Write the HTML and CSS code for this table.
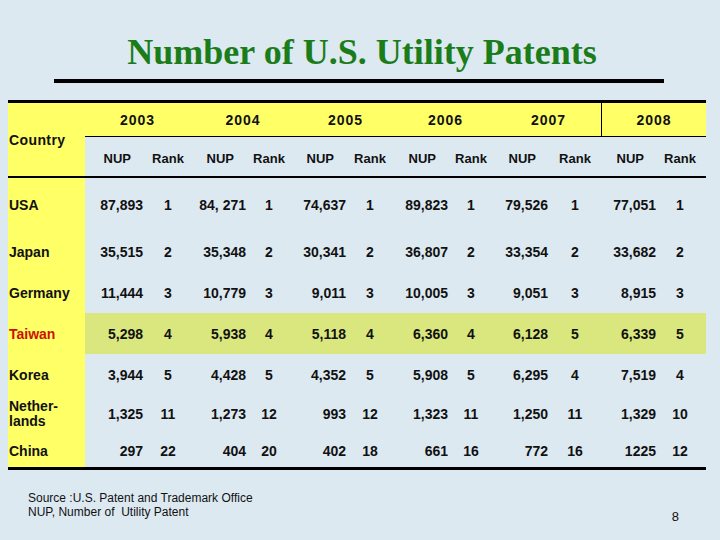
FILE: index.html
```html
<!DOCTYPE html>
<html>
<head>
<meta charset="utf-8">
<link rel="stylesheet" href="styles.css">
</head>
<body>
<div class="slide">
  <h1 class="title">Number of U.S. Utility Patents</h1>
  <div class="rule"></div>
  <div class="table">
    <div class="head">
      <div class="country-h">Country</div>
      <div class="years">
        <div class="year">2003</div>
        <div class="year">2004</div>
        <div class="year">2005</div>
        <div class="year">2006</div>
        <div class="year sep">2007</div>
        <div class="year">2008</div>
      </div>
      <div class="subs">
        <div class="nup-h">NUP</div><div class="rank-h">Rank</div>
        <div class="nup-h">NUP</div><div class="rank-h">Rank</div>
        <div class="nup-h">NUP</div><div class="rank-h">Rank</div>
        <div class="nup-h">NUP</div><div class="rank-h">Rank</div>
        <div class="nup-h">NUP</div><div class="rank-h">Rank</div>
        <div class="nup-h">NUP</div><div class="rank-h">Rank</div>
      </div>
    </div>
    <div class="row r-usa">
      <div class="cty">USA</div>
      <div class="nup">87,893</div><div class="rank">1</div>
      <div class="nup">84, 271</div><div class="rank">1</div>
      <div class="nup">74,637</div><div class="rank">1</div>
      <div class="nup">89,823</div><div class="rank">1</div>
      <div class="nup">79,526</div><div class="rank">1</div>
      <div class="nup">77,051</div><div class="rank">1</div>
    </div>
    <div class="row r-std">
      <div class="cty">Japan</div>
      <div class="nup">35,515</div><div class="rank">2</div>
      <div class="nup">35,348</div><div class="rank">2</div>
      <div class="nup">30,341</div><div class="rank">2</div>
      <div class="nup">36,807</div><div class="rank">2</div>
      <div class="nup">33,354</div><div class="rank">2</div>
      <div class="nup">33,682</div><div class="rank">2</div>
    </div>
    <div class="row r-std">
      <div class="cty">Germany</div>
      <div class="nup">11,444</div><div class="rank">3</div>
      <div class="nup">10,779</div><div class="rank">3</div>
      <div class="nup">9,011</div><div class="rank">3</div>
      <div class="nup">10,005</div><div class="rank">3</div>
      <div class="nup">9,051</div><div class="rank">3</div>
      <div class="nup">8,915</div><div class="rank">3</div>
    </div>
    <div class="row r-std hl">
      <div class="cty red">Taiwan</div>
      <div class="nup">5,298</div><div class="rank">4</div>
      <div class="nup">5,938</div><div class="rank">4</div>
      <div class="nup">5,118</div><div class="rank">4</div>
      <div class="nup">6,360</div><div class="rank">4</div>
      <div class="nup">6,128</div><div class="rank">5</div>
      <div class="nup">6,339</div><div class="rank">5</div>
    </div>
    <div class="row r-std">
      <div class="cty">Korea</div>
      <div class="nup">3,944</div><div class="rank">5</div>
      <div class="nup">4,428</div><div class="rank">5</div>
      <div class="nup">4,352</div><div class="rank">5</div>
      <div class="nup">5,908</div><div class="rank">5</div>
      <div class="nup">6,295</div><div class="rank">4</div>
      <div class="nup">7,519</div><div class="rank">4</div>
    </div>
    <div class="row r-nl">
      <div class="cty two">Nether-<br>lands</div>
      <div class="nup">1,325</div><div class="rank">11</div>
      <div class="nup">1,273</div><div class="rank">12</div>
      <div class="nup">993</div><div class="rank">12</div>
      <div class="nup">1,323</div><div class="rank">11</div>
      <div class="nup">1,250</div><div class="rank">11</div>
      <div class="nup">1,329</div><div class="rank">10</div>
    </div>
    <div class="row r-cn">
      <div class="cty">China</div>
      <div class="nup">297</div><div class="rank">22</div>
      <div class="nup">404</div><div class="rank">20</div>
      <div class="nup">402</div><div class="rank">18</div>
      <div class="nup">661</div><div class="rank">16</div>
      <div class="nup">772</div><div class="rank">16</div>
      <div class="nup">1225</div><div class="rank">12</div>
    </div>
  </div>
  <div class="footer">
    <div class="source">Source :U.S. Patent and Trademark Office<br>NUP, Number of&nbsp; Utility Patent</div>
    <div class="pageno">8</div>
  </div>
</div>
</body>
</html>
```

FILE: styles.css
```css
html, body {
  margin: 0;
  padding: 0;
}
body {
  background: #dde9f1;
}
.slide {
  width: 720px;
  height: 540px;
  background: #dde9f1;
  padding-top: 32px;
  box-sizing: border-box;
  font-family: "Liberation Sans", Arial, sans-serif;
  color: #111;
  overflow: hidden;
}
.title {
  margin: 0;
  font-family: "Liberation Serif", "Times New Roman", serif;
  font-weight: bold;
  font-size: 36px;
  line-height: 40px;
  color: #1a7d1a;
  text-align: center;
  padding-left: 4px;
}
.rule {
  margin: 7px 0 0 54px;
  width: 610px;
  height: 4px;
  background: #000;
}
.table {
  margin: 17px 0 0 8px;
  width: 698px;
  border-top: 3px solid #000;
  border-bottom: 3px solid #000;
  font-weight: bold;
  font-size: 14px;
}
.head {
  display: grid;
  grid-template-columns: 77px 621px;
  grid-template-rows: 34px 39px;
  border-bottom: 2px solid #000;
}
.country-h {
  grid-row: 1 / 3;
  background: #ffff66;
  display: flex;
  align-items: center;
  padding-left: 1px;
  letter-spacing: 0.4px;
}
.years {
  display: grid;
  grid-template-columns: 105px 106px 99px 101px 106px 104px;
  background: #ffff66;
  border-bottom: 1px solid #000;
}
.year {
  display: flex;
  align-items: center;
  justify-content: center;
  letter-spacing: 1px;
}
.year.sep {
  border-right: 1px solid #000;
}
.subs {
  display: grid;
  grid-template-columns: 65px 36px 67px 32px 68px 34px 68px 32px 68px 40px 68px 43px;
  font-size: 13px;
  align-items: center;
  padding-top: 3px;
}
.nup-h {
  text-align: right;
  padding-right: 19px;
}
.rank-h {
  text-align: center;
}
.rank-h:last-child {
  padding-right: 9px;
}
.row {
  display: grid;
  grid-template-columns: 77px 65px 36px 67px 32px 68px 34px 68px 32px 68px 40px 68px 43px;
  align-items: center;
}
.r-usa { height: 53px; }
.r-std { height: 41px; }
.r-nl { height: 37px; }
.r-cn { height: 35px; padding-top: 3px; box-sizing: border-box; }
.row > div {
  height: 100%;
  display: flex;
  align-items: center;
}
.cty {
  background: #ffff66;
  padding-left: 1px;
}
.cty.two {
  line-height: 15px;
}
.r-cn .cty {
  margin-top: -3px;
  height: calc(100% + 3px) !important;
  padding-top: 3px;
  box-sizing: border-box;
}
.red {
  color: #cc1100;
}
.hl {
  background: #d9e77e;
}
.nup {
  justify-content: flex-end;
  padding-right: 7px;
}
.rank {
  justify-content: center;
}
.rank:last-child {
  padding-right: 9px;
}
.footer {
  display: flex;
  justify-content: space-between;
  align-items: flex-start;
  margin-top: 21px;
}
.source {
  margin-left: 28px;
  font-weight: normal;
  font-size: 12px;
  line-height: 14px;
  color: #111;
}
.pageno {
  margin-right: 41px;
  margin-top: 18px;
  font-size: 13px;
  line-height: 15px;
}
```
